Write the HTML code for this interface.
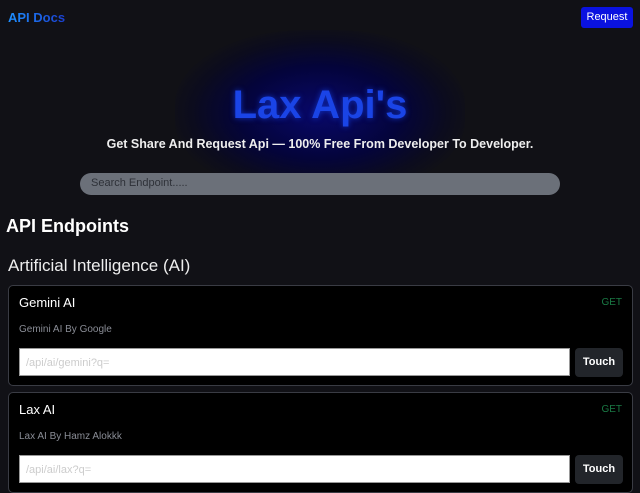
<!DOCTYPE html>
<html><head><style>
*{margin:0;padding:0;box-sizing:border-box}
body{width:640px;height:480px;overflow:hidden;background:#111116;font-family:"Liberation Sans",sans-serif;position:relative;color:#fff}
.a{position:absolute}
.glow{left:175px;top:30px;width:290px;height:165px;border-radius:45%;background:radial-gradient(ellipse at center,#08086a 0%,#04043a 40%,rgba(8,8,35,0.6) 62%,rgba(17,17,22,0) 75%)}
.card{left:8px;width:625px;height:101px;background:#000;border:1px solid #3a3c44;border-radius:5px}
.card .t{left:10px;top:9px;font-size:13px}
.card .g{right:10px;top:11px;font-size:10px;color:#1a7a45}
.card .d{left:10px;top:38px;font-size:10px;color:#8a8d96}
.card .in{left:10px;top:62px;width:551px;height:28px;background:#fff;border:1px solid #999;color:#ccc;font-size:11px;padding:8px 6px}
.card .b{left:566px;top:62px;width:48px;height:29px;background:#22252a;border-radius:4px;font-size:11px;font-weight:bold;text-align:center;line-height:29px}
</style></head><body>
<div class="a glow"></div>
<div class="a" style="left:8px;top:10px;font-size:13px;font-weight:bold;background:linear-gradient(90deg,#1e90ff,#1a3fd0);-webkit-background-clip:text;color:transparent">API Docs</div>
<div class="a" style="left:581px;top:7px;width:52px;height:21px;background:#0a12e0;border-radius:3px;font-size:11px;text-align:center;line-height:21px">Request</div>
<div class="a" style="left:0;width:640px;top:83px;text-align:center;font-size:40px;font-weight:bold;color:#1a44e6;text-shadow:0 0 6px #1030c0">Lax Api's</div>
<div class="a" style="left:0;width:640px;top:137px;text-align:center;font-size:12.5px;font-weight:bold;color:#eee">Get Share And Request Api — 100% Free From Developer To Developer.</div>
<div class="a" style="left:80px;top:173px;width:480px;height:22px;background:#6b7079;border-radius:11px;font-size:11px;color:#2e3138;padding:4px 11px">Search Endpoint.....</div>
<div class="a" style="left:6px;top:216px;font-size:18px;font-weight:bold">API Endpoints</div>
<div class="a" style="left:8px;top:256px;font-size:17px;color:#eee">Artificial Intelligence (AI)</div>
<div class="a card" style="top:285px"><div class="a t">Gemini AI</div><div class="a g">GET</div><div class="a d">Gemini AI By Google</div><div class="a in">/api/ai/gemini?q=</div><div class="a b">Touch</div></div>
<div class="a card" style="top:392px"><div class="a t">Lax AI</div><div class="a g">GET</div><div class="a d">Lax AI By Hamz Alokkk</div><div class="a in">/api/ai/lax?q=</div><div class="a b">Touch</div></div>
</body></html>
